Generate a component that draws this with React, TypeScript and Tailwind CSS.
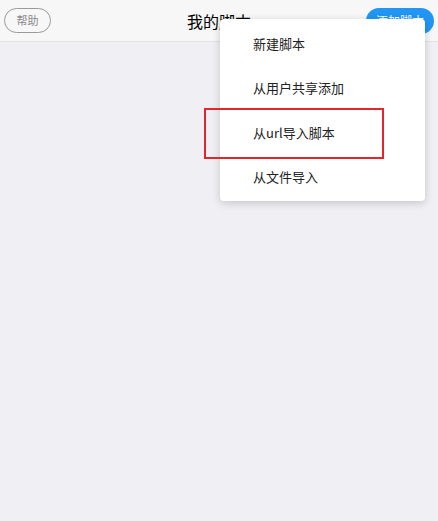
export default function App() {
  const items = ["新建脚本", "从用户共享添加", "从url导入脚本", "从文件导入"]

  return (
    <div
      className="relative w-[438px] h-[521px] overflow-hidden bg-[#efeff4]"
      style={{ fontFamily: '"Noto Sans CJK SC", "Liberation Sans", sans-serif' }}
    >
      {/* Header */}
      <header className="relative h-[42px] flex items-center justify-between px-[4px] bg-[#f7f7f7] border-b border-[#e2e2e4]">
        <button className="h-[25px] w-[47px] rounded-full border border-[#9a9a9a] text-[11px] text-[#8a8a8a] leading-none">
          帮助
        </button>
        <h1 className="absolute left-0 right-0 text-center text-[16px] text-black pointer-events-none">
          我的脚本
        </h1>
        <button className="h-[26px] w-[68px] rounded-full bg-[#2196f3] text-[12px] text-white leading-none">
          添加脚本
        </button>
      </header>

      {/* Dropdown menu */}
      <div className="absolute left-[220px] top-[19px] w-[205px] rounded-[4px] bg-white shadow-[0_2px_8px_rgba(0,0,0,0.18)] py-[2px]">
        {items.map((label) => (
          <div key={label} className="h-[44.5px] flex items-center pl-[33px] text-[13px] text-[#222]">
            {label}
          </div>
        ))}
      </div>

      {/* Red annotation box */}
      <div className="absolute left-[204px] top-[108px] w-[180px] h-[51px] border-2 border-[#e3262b] pointer-events-none" />
    </div>
  )
}
